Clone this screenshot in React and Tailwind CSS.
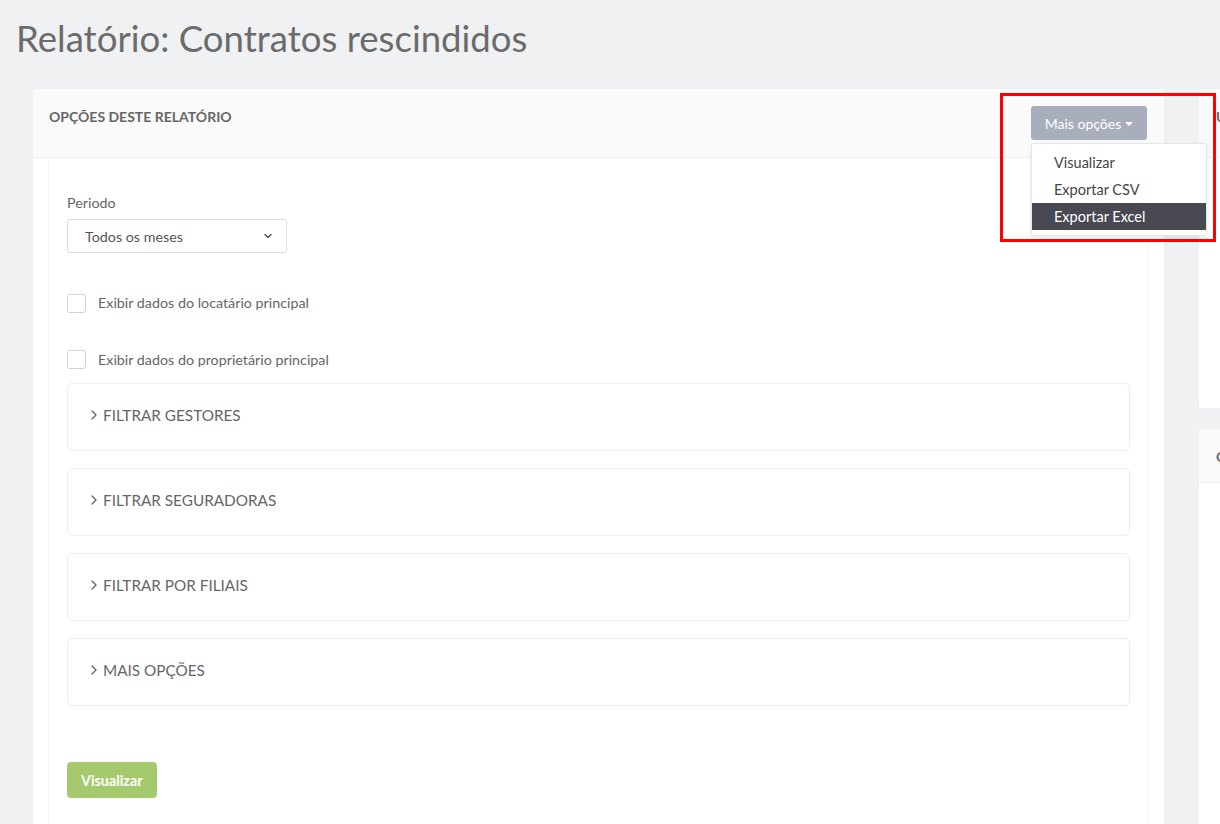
import { ChevronRight, ChevronDown } from "lucide-react";

const filters = ["Filtrar gestores", "Filtrar seguradoras", "Filtrar por filiais", "Mais opções"];

function Check({ label }) {
  return (
    <label className="flex items-center gap-3 text-[14.3px] text-[#666]">
      <span className="h-[19px] w-[19px] rounded-[3px] border border-[#cfd2d8] bg-white" />
      {label}
    </label>
  );
}

export default function App() {
  return (
    <div
      className="relative h-[824px] w-[1220px] overflow-hidden bg-[#f0f1f3]"
      style={{ fontFamily: "Lato, 'Open Sans', sans-serif" }}
    >
      <h1 className="pl-4 pt-[14px] text-[36.6px] leading-[48px] text-[#6b6b6b]">
        Relatório: Contratos rescindidos
      </h1>

      <div className="mt-[27px] flex gap-[35px] pl-[33px]">
        {/* main card */}
        <div className="w-[1131px] shrink-0 rounded-t-[3px] bg-white">
          <div className="h-[69px] border-b border-[#eef0f3] bg-[#fafafa] px-4 pt-[17px] text-[14px] font-bold uppercase text-[#666]">
            Opções deste relatório
          </div>
          <div className="mx-[15px] border-x border-[#f6f6f7] px-[18px] pb-10 pt-[34px]">
            <div className="text-[14.3px] text-[#666]">Periodo</div>
            <div className="mt-[6px] flex h-[34px] w-[220px] items-center justify-between rounded-[3px] border border-[#dcdee2] pl-[17px] pr-3 text-[14.3px] text-[#555]">
              Todos os meses
              <ChevronDown className="h-3 w-3 text-[#555]" strokeWidth={3} />
            </div>

            <div className="mt-[39px]">
              <Check label="Exibir dados do locatário principal" />
            </div>
            <div className="mt-[35px]">
              <Check label="Exibir dados do proprietário principal" />
            </div>

            <div className="mt-[13px] flex flex-col gap-[17px]">
              {filters.map((f) => (
                <div
                  key={f}
                  className="flex h-[68px] items-start rounded-[5px] border border-[#eceef1] pl-[18px] pt-[20px] text-[15.3px] uppercase text-[#666]"
                >
                  <ChevronRight className="mr-[1px] mt-[3px] h-4 w-4" strokeWidth={2} />
                  {f}
                </div>
              ))}
            </div>

            <button className="mt-[56px] h-9 rounded-[4px] bg-[#a5c96d] px-[14px] text-[14.3px] font-bold text-white">
              Visualizar
            </button>
          </div>
        </div>

        {/* right column */}
        <div className="flex w-[200px] shrink-0 flex-col gap-[21px]">
          <div className="h-[319px] rounded-[3px] bg-white">
            <div className="h-[69px] border-b border-[#eef0f3] bg-[#fafafa] pl-[17px] pt-[17px] text-[14px] font-bold text-[#666]">
              ÚLTIMOS
            </div>
          </div>
          <div className="h-[400px] rounded-[3px] bg-white">
            <div className="h-[54px] border-b border-[#eef0f3] bg-[#fafafa] pl-[17px] pt-[17px] text-[14px] font-bold text-[#666]">
              OUTROS
            </div>
          </div>
        </div>
      </div>

      {/* dropdown button + menu */}
      <button className="absolute left-[1031px] top-[106px] flex h-[34px] w-[116px] items-center justify-center gap-1 rounded-[3px] bg-[#a9aebd] text-[14px] text-white">
        Mais opções
        <span className="mt-[2px] h-0 w-0 border-x-4 border-t-4 border-x-transparent border-t-white" />
      </button>
      <div className="absolute left-[1031px] top-[143px] w-[176px] rounded-[2px] border border-[#e4e6ea] bg-white py-[5px] text-[14.5px] text-[#444] shadow-[0_2px_4px_rgba(0,0,0,0.08)]">
        <div className="h-[27px] pl-[22px] leading-[27px]">Visualizar</div>
        <div className="h-[27px] pl-[22px] leading-[27px]">Exportar CSV</div>
        <div className="h-[27px] bg-[#484953] pl-[22px] leading-[27px] text-white">Exportar Excel</div>
      </div>

      {/* annotation box */}
      <div className="pointer-events-none absolute left-[1000px] top-[93px] h-[149px] w-[216px] border-[3px] border-[#ff0000]" />
    </div>
  );
}
